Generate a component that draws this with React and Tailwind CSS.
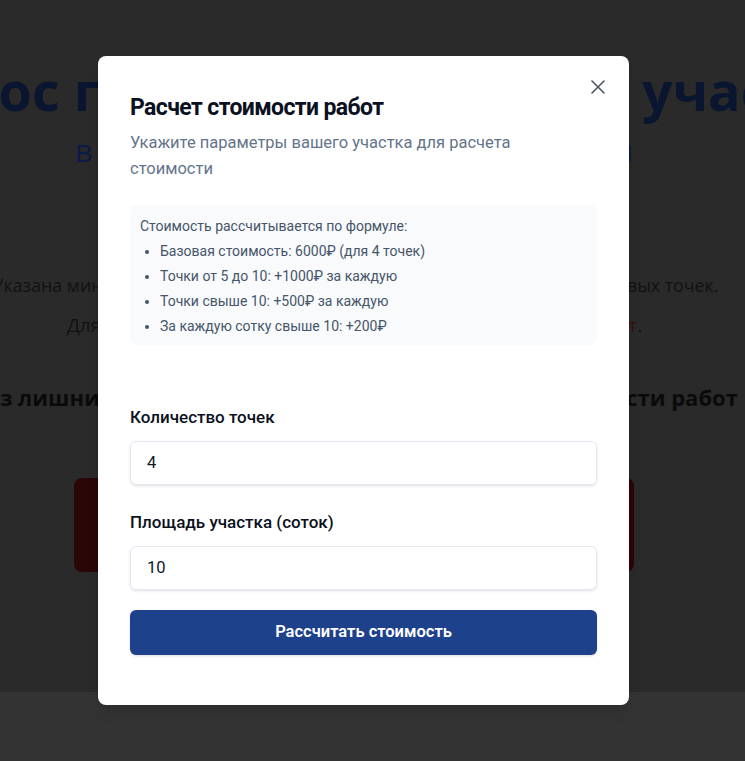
import React from "react";

function CloseIcon() {
  return (
    <svg width="24" height="24" viewBox="0 0 24 24" fill="none" stroke="currentColor" strokeWidth="1.6" strokeLinecap="round">
      <path d="M18 6 6 18" />
      <path d="m6 6 12 12" />
    </svg>
  );
}

export default function App() {
  return (
    <div className="relative h-[761px] w-full overflow-hidden bg-[#2a2a2a] font-['Open_Sans',sans-serif]">
      {/* background page (dimmed by overlay) */}
      <div className="flex flex-col">
        <div className="flex justify-center whitespace-nowrap pt-[58px]">
          <h1 className="text-[54px] font-bold leading-[64px] text-[#0a1630]">Вынос границ земельного участка</h1>
        </div>
        <div className="mt-[8px] flex justify-center whitespace-nowrap pr-[37px]">
          <p className="text-[30.6px] leading-[40px] text-[#0c1a48]">в Москве и области в короткие сроки</p>
        </div>
        <div className="mt-[101px] flex justify-center whitespace-nowrap pr-[34px]">
          <p className="text-[17.8px] leading-[28px] text-[#121212]">Указана минимальная стоимость работ для участка до 10 соток и 4 межевых точек.</p>
        </div>
        <div className="mt-[12px] flex justify-center whitespace-nowrap pr-[36px]">
          <p className="text-[18.7px] leading-[28px] text-[#121212]">
            Для получения точной цены воспользуйтесь сервисом <span className="text-[#3a0c0c]">расчет</span>.
          </p>
        </div>
        <div className="mt-[42px] flex justify-center whitespace-nowrap pr-[34px]">
          <h2 className="text-[22px] font-bold leading-[32px] text-[#0a0a0a]">Без лишних затрат: понятный и честный расчет стоимости работ</h2>
        </div>
        <div className="ml-[74px] mt-[65px] h-[94px] w-[560px] rounded-lg bg-[#2b0606]" />
        <div className="mt-[120px] h-[69px] bg-[#333333]" />
      </div>

      {/* modal */}
      <div className="absolute inset-0 flex justify-center pr-[18px] pt-[56px] font-['Roboto',sans-serif]">
        <div className="relative h-fit w-[531px] rounded-lg bg-white px-8 pt-9 pb-[50px] shadow-lg">
          <button className="absolute right-[19px] top-[19px] text-[#4b5563]">
            <CloseIcon />
          </button>
          <h3 className="text-[23px] font-bold leading-8 tracking-[-0.6px] text-[#0b1120]">Расчет стоимости работ</h3>
          <p className="mt-[6px] max-w-[430px] text-[16.5px] leading-[26px] text-[#64748b]">
            Укажите параметры вашего участка для расчета стоимости
          </p>
          <div className="mt-[23px] rounded-lg bg-[#f8fafc] px-[10px] pt-[9px] pb-[6px] text-[14px] leading-[25px] text-[#475569]">
            <p>Стоимость рассчитывается по формуле:</p>
            <ul className="list-disc pl-[20px]">
              <li>Базовая стоимость: 6000₽ (для 4 точек)</li>
              <li>Точки от 5 до 10: +1000₽ за каждую</li>
              <li>Точки свыше 10: +500₽ за каждую</li>
              <li>За каждую сотку свыше 10: +200₽</li>
            </ul>
          </div>
          <label className="mt-[60px] block text-[17px] font-medium leading-6 text-[#0b1120]">Количество точек</label>
          <div className="mt-[12px] flex h-[44px] items-center rounded-md border border-[#e2e8f0] px-4 text-[16.5px] text-[#111827] shadow-sm">
            4
          </div>
          <label className="mt-[25px] block text-[17px] font-medium leading-6 text-[#0b1120]">Площадь участка (соток)</label>
          <div className="mt-[12px] flex h-[44px] items-center rounded-md border border-[#e2e8f0] px-4 text-[16.5px] text-[#111827] shadow-sm">
            10
          </div>
          <button className="mt-[20px] flex h-[45px] w-full items-center justify-center rounded-md bg-[#1e418b] text-[16.5px] font-semibold text-white shadow-sm">
            Рассчитать стоимость
          </button>
        </div>
      </div>
    </div>
  );
}
